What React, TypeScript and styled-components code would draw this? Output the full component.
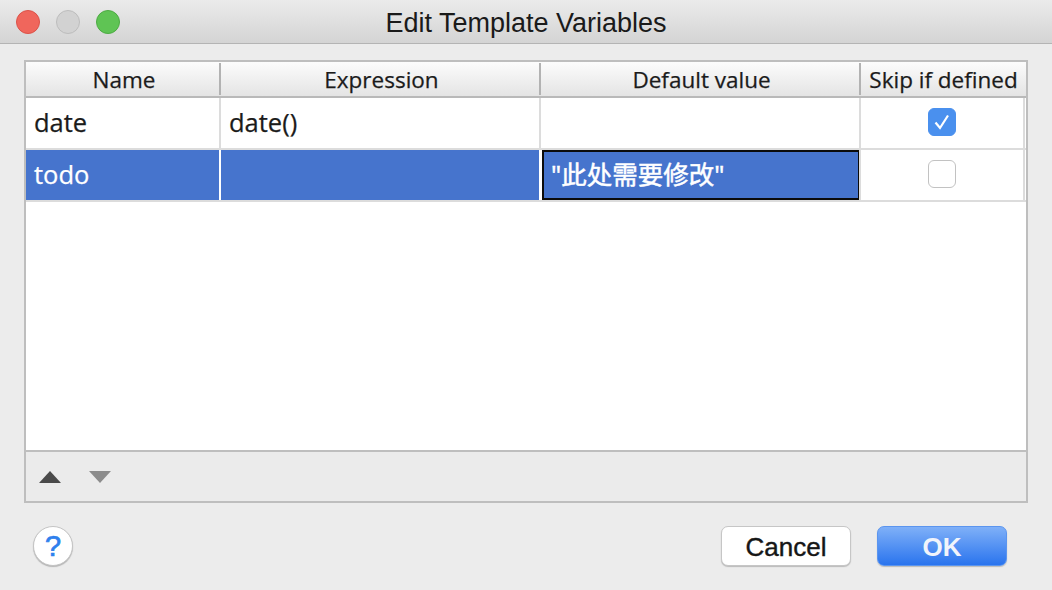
import React from "react";
import styled, { createGlobalStyle } from "styled-components";

const Global = createGlobalStyle`
  html, body { margin: 0; padding: 0; background: #ececec; }
  body { width: 1052px; height: 590px; overflow: hidden; }
`;
const COLS = "194px 1px 319px 1px 319px 1px 163px 2px";
const Win = styled.div`
  width: 1052px; height: 590px; display: flex; flex-direction: column;
  background: #ececec; font-family: "Open Sans", "Noto Sans", sans-serif; color: #1b1b1b;
`;
const TitleBar = styled.div`
  height: 44px; flex: none; display: flex; align-items: center; position: relative;
  padding: 0 16px; gap: 16px; box-sizing: border-box;
  background: linear-gradient(#ebebeb, #d4d4d4); border-bottom: 1px solid #b4b4b4;
`;
const Light = styled.span<{ $bg: string; $line: string }>`
  width: 24px; height: 24px; border-radius: 50%; box-sizing: border-box;
  background: ${p => p.$bg}; border: 1px solid ${p => p.$line};
`;
const Title = styled.div`
  position: absolute; left: 0; right: 0; top: 0; height: 43px; line-height: 46px; text-align: center;
  font-family: "Liberation Sans", sans-serif; font-size: 27px; color: #1a1a1a;
`;
const Panel = styled.div`
  margin: 16px 24px 0; height: 443px; flex: none; box-sizing: border-box;
  border: 2px solid #bebebe; display: flex; flex-direction: column; background: #fff;
`;
const Header = styled.div`
  height: 34px; flex: none; display: grid; grid-template-columns: ${COLS};
  background: linear-gradient(#fcfcfc, #e4e4e4); border-bottom: 2px solid #b9b9b9;
`;
const HeadCell = styled.div`
  font-size: 22.5px; line-height: 36px; text-align: center; font-weight: 500; white-space: nowrap; overflow: hidden;
  padding-left: 2px; -webkit-text-stroke: 0.25px #1b1b1b;
`;
const HeadSep = styled.div`
  width: 2px; margin-left: -1px; background: #b2b2b2; height: 32px; margin-top: 1px;
`;
const Row = styled.div`
  height: 50px; flex: none; display: grid; grid-template-columns: ${COLS};
`;
const Cell = styled.div<{ $sel?: boolean; $edit?: boolean }>`
  font-size: 25.5px; line-height: 48px; padding-left: 8px; box-sizing: border-box; white-space: nowrap;
  background: ${p => (p.$sel ? "#4674cd" : "#fff")}; color: ${p => (p.$sel ? "#fff" : "#1b1b1b")};
  font-family: "Open Sans", "Noto Sans CJK SC", sans-serif;
  -webkit-text-stroke: ${p => (p.$edit ? "0.5px" : "0.25px")} ${p => (p.$sel ? "#fff" : "#1b1b1b")};
  ${p => p.$edit ? "border: 2px solid #0b0b0b; padding-left: 7px; line-height: 44px; margin-left: 1px;" : ""}
`;
const CheckCell = styled.div`
  display: flex; align-items: center; justify-content: center; background: #fff; padding-right: 2px;
`;
const Check = styled.div<{ $on?: boolean }>`
  width: 28px; height: 28px; border-radius: 6px; box-sizing: border-box; display: flex; align-items: center; justify-content: center;
  margin-top: -2px;
  background: ${p => (p.$on ? "#4a90ee" : "#fff")}; border: 1px solid ${p => (p.$on ? "#4a90ee" : "#c2c2c2")};
`;
const Sep = styled.div<{ $blue?: boolean }>`
  width: 2px; margin-left: -1px; background: ${p => (p.$blue ? "#fff" : "#dcdcdc")};
`;
const RowLine = styled.div`
  height: 2px; width: 1000px; background: #dcdcdc; flex: none;
`;
const Rows = styled.div`
  flex: 1; display: flex; flex-direction: column; background: #fff;
`;
const Tools = styled.div`
  height: 51px; flex: none; display: flex; align-items: center; gap: 28px; padding-left: 13px;
  background: #ebebeb; border-top: 2px solid #bebebe; box-sizing: border-box;
`;
const Footer = styled.div`
  display: flex; align-items: center; padding: 23px 45px 0 33px;
`;
const Help = styled.div`
  width: 40px; height: 40px; border-radius: 50%; box-sizing: border-box; background: #fff; border: 1px solid #c4c4c4;
  box-shadow: 0 1px 1px #b5b5b5; color: #2f80ed; font-family: "Liberation Sans", sans-serif; font-size: 29px;
  -webkit-text-stroke: 0.7px #2f80ed; line-height: 38px; text-align: center; margin-right: auto;
`;
const Btn = styled.div<{ $primary?: boolean }>`
  width: 130px; height: 40px; border-radius: 7px; box-sizing: border-box; text-align: center;
  font-family: "Liberation Sans", sans-serif; font-size: 26px; line-height: 40px; margin-left: 26px;
  background: ${p => (p.$primary ? "linear-gradient(#7fb0f8, #2a74ee)" : "#fff")};
  color: ${p => (p.$primary ? "#f1f4fb" : "#161616")};
  font-weight: ${p => (p.$primary ? 700 : 400)};
  border: 1px solid ${p => (p.$primary ? "#5b95ef" : "#c6c6c6")};
  box-shadow: 0 1px 1px #bbb;
  -webkit-text-stroke: ${p => (p.$primary ? "0" : "0.4px #161616")};
`;

export default function App() {
  return (
    <Win>
      <Global />
      <TitleBar>
        <Light $bg="#f0665c" $line="#dc5249" />
        <Light $bg="#d2d2d2" $line="#bdbdbd" />
        <Light $bg="#5fc454" $line="#4dab43" />
        <Title>Edit Template Variables</Title>
      </TitleBar>
      <Panel>
        <Header>
          <HeadCell>Name</HeadCell><HeadSep />
          <HeadCell>Expression</HeadCell><HeadSep />
          <HeadCell>Default value</HeadCell><HeadSep />
          <HeadCell>Skip if defined</HeadCell>
        </Header>
        <Rows>
          <Row>
            <Cell>date</Cell><Sep />
            <Cell>date()</Cell><Sep />
            <Cell /><Sep />
            <CheckCell>
              <Check $on>
                <svg width="20" height="20" viewBox="0 0 20 20" fill="none">
                  <path d="M3.5 10.5 L8 16 L16 3.5" stroke="#fff" strokeWidth="2.2" />
                </svg>
              </Check>
            </CheckCell>
            <Sep />
          </Row>
          <RowLine />
          <Row>
            <Cell $sel>todo</Cell><Sep $blue />
            <Cell $sel /><Sep $blue />
            <Cell $sel $edit>"此处需要修改"</Cell><Sep />
            <CheckCell><Check /></CheckCell>
            <Sep />
          </Row>
          <RowLine />
        </Rows>
        <Tools>
          <svg width="22" height="12" viewBox="0 0 22 12"><path d="M0 12 L11 0 L22 12 Z" fill="#4a4a4a" /></svg>
          <svg width="22" height="12" viewBox="0 0 22 12"><path d="M0 0 L22 0 L11 12 Z" fill="#8c8c8c" /></svg>
        </Tools>
      </Panel>
      <Footer>
        <Help>?</Help>
        <Btn>Cancel</Btn>
        <Btn $primary>OK</Btn>
      </Footer>
    </Win>
  );
}
